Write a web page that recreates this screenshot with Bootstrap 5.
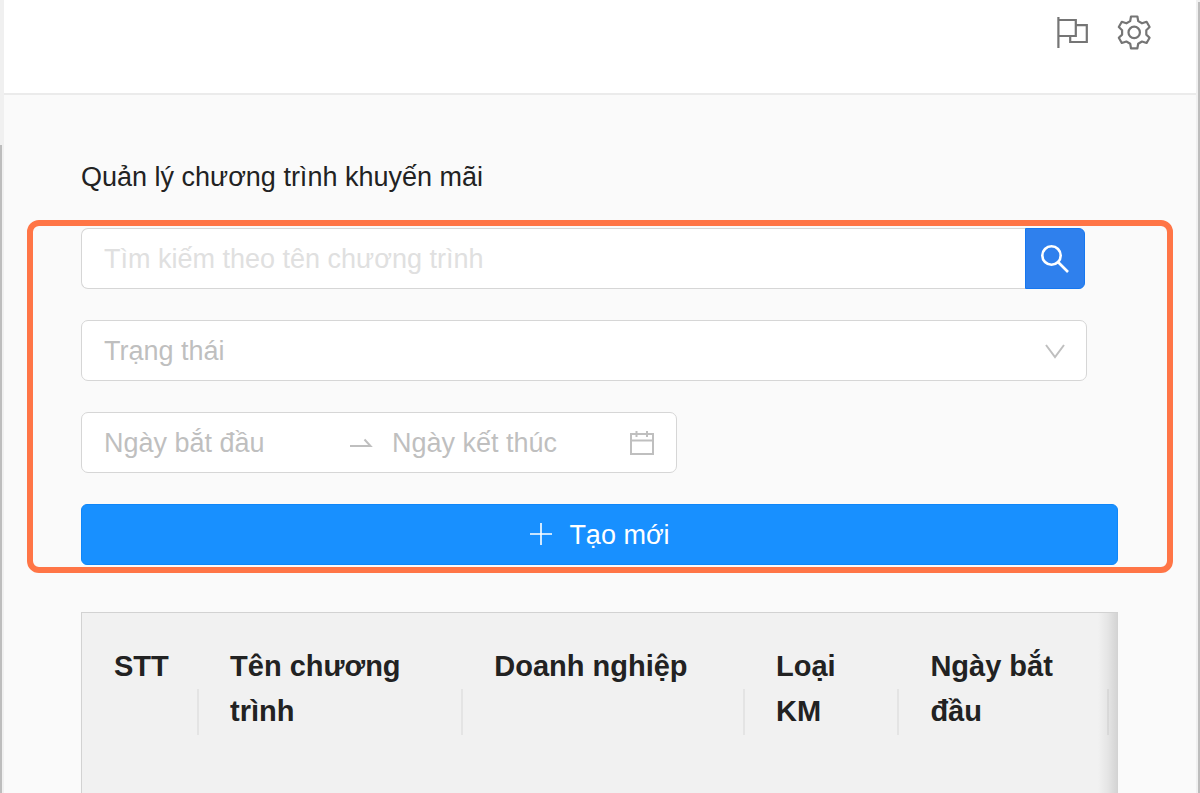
<!DOCTYPE html>
<html lang="vi">
<head>
<meta charset="utf-8">
<meta name="viewport" content="width=device-width, initial-scale=1">
<title>Quản lý chương trình khuyến mãi</title>
<link href="https://cdn.jsdelivr.net/npm/bootstrap@5.3.0/dist/css/bootstrap.min.css" rel="stylesheet">
<style>
  body { font-family: "Liberation Sans", Arial, sans-serif; font-size: 27px; line-height: 40px; color: #222; background: #fafafa; }
  .edge { flex: 0 0 4px; background: #f0f0f0; }
  .edge-left { padding-top: 145px; }
  .edge-left .thumb { width: 2px; background: #bdbdbd; }
  .edge-right { padding: 2px 0 0 2px; }
  .edge-right .thumb { width: 2px; background: #bdbdbd; }
  .topbar { height: 95px; padding: 14px 44px 0 0; gap: 26px; background: #fff; border-bottom: 2px solid #ebebeb; }
  .tool { width: 36px; height: 36px; color: #757575; }
  .page-title { font-size: 27px; line-height: 40px; font-weight: 400; margin: 62px 0 23px; padding: 0 77px; }
  .filters { margin: 0 23px; padding: 2px 49px 2px 48px; border: 6px solid #ff7546; border-radius: 12px; gap: 31px; }
  .field { height: 61px; background: #fff; border: 1px solid #d6d6d6; border-radius: 7px; }
  .field:focus-within { border-color: #40a9ff; }
  .plain { font-size: 27px; line-height: 40px; color: #333; background: transparent; padding: 0; border: 0; outline: 0; min-width: 0; }
  .plain::placeholder { color: #bfbfbf; opacity: 1; }
  .search { margin-right: 33px; }
  .search .field { border-right: 0; border-radius: 7px 0 0 7px; padding-left: 22px; }
  .search .plain::placeholder { color: #e0e0e0; }
  .btn-search { width: 60px; padding: 0; border-radius: 0 6px 6px 0; background: #2f80ed; border: 1px solid #1677f0; color: #fff; }
  .status { margin-right: 31px; }
  .status select { appearance: none; padding: 0 60px 0 22px; color: #bfbfbf; font-size: 27px; outline: 0; }
  .status svg { right: 20px; top: 19px; pointer-events: none; }
  .range { width: 57.5%; padding: 0 20px 0 22px; margin-right: auto; }
  .range .start { flex: 0 0 244px; }
  .btn-create { height: 61px; padding: 2px 0 0; gap: 16px; border-radius: 6px; background: #1890ff; border: 1px solid #0f86f8; color: #fff; font-size: 27px; }
  .grid-box { margin: 39px 78px 0 77px; border: solid #d2d2d2; border-width: 1px 0 0 1px; background: #f1f1f1; }
  .grid-box::after { content: ""; position: absolute; top: 0; right: 0; bottom: 0; width: 20px; background: linear-gradient(to right, rgba(0,0,0,0), rgba(0,0,0,.05) 50%, rgba(0,0,0,.13)); }
  .grid { width: 100%; table-layout: fixed; }
  .grid th { height: 199px; padding: 31px 20px 0 31px; vertical-align: top; font-size: 29px; line-height: 45px; font-weight: 700; background: linear-gradient(#e4e4e4, #e4e4e4) right 0 top 76px / 2px 46px no-repeat; }
  .grid th:first-child { padding-left: 32px; }
  .grid th:last-child { background: none; padding: 0; }
  .w-no { width: 11.3%; } .w-name { width: 25.5%; } .w-org { width: 27.2%; } .w-type { width: 14.9%; } .w-date { width: 20.2%; }
</style>
</head>
<body>
<div class="d-flex vh-100 overflow-hidden">
  <div class="edge edge-left d-flex"><div class="thumb"></div></div>
  <div class="flex-grow-1 overflow-hidden">
    <header class="topbar d-flex justify-content-end">
      <button type="button" class="tool btn p-0 border-0 d-flex" aria-label="Ngôn ngữ">
        <svg width="36" height="36" viewBox="0 0 36 36" fill="none" stroke="currentColor" stroke-width="2.2"><path d="M4.400 3v31M4.400 6h17.400v16H4.400M21.800 11.200h11V28H16.200v-6"/></svg>
      </button>
      <button type="button" class="tool btn p-0 border-0 d-flex" aria-label="Cài đặt">
        <svg width="36" height="36" viewBox="0 0 36 36" fill="none" stroke="currentColor" stroke-width="2.2" stroke-linejoin="round"><path d="M15 2.500h6.400l.8 4.600 3.800 2.200 4.600-1.500 3 5.200-3.300 3.200v4.400l3.300 3.200-3 5.200-4.600-1.500-3.800 2.200-.8 4.600H15l-.8-4.600-3.800-2.200-4.600 1.500-3-5.200 3.300-3.200v-4.400L2.800 13l3-5.200 4.600 1.500 3.800-2.200z"/><circle cx="18.200" cy="18.400" r="5.700"/></svg>
      </button>
    </header>
    <main>
      <h1 class="page-title">Quản lý chương trình khuyến mãi</h1>
      <form class="filters d-flex flex-column">
        <div class="search d-flex">
          <div class="field flex-grow-1 d-flex align-items-center">
            <input class="plain w-100" type="text" placeholder="Tìm kiếm theo tên chương trình" aria-label="Tìm kiếm theo tên chương trình">
          </div>
          <button type="button" class="btn btn-search d-flex align-items-center justify-content-center" aria-label="Tìm kiếm">
            <svg width="32" height="32" viewBox="0 0 32 32" fill="none" stroke="currentColor" stroke-width="2.600"><circle cx="12.500" cy="12.500" r="9.200"/><path d="M19 19l10 10"/></svg>
          </button>
        </div>
        <div class="status position-relative">
          <select class="field w-100" aria-label="Trạng thái"><option>Trạng thái</option><option>Hoạt động</option></select>
          <svg class="position-absolute" width="24" height="24" viewBox="0 0 24 24" fill="none" stroke="#bfbfbf" stroke-width="2"><path d="M3 6l9 12 9-12"/></svg>
        </div>
        <div class="range field d-flex align-items-center">
          <input class="plain start" type="text" placeholder="Ngày bắt đầu" aria-label="Ngày bắt đầu">
          <svg class="flex-shrink-0" width="28" height="28" viewBox="0 0 28 28" fill="none" stroke="#bfbfbf" stroke-width="2"><path d="M2 17h20.500l-6-6.500"/></svg>
          <input class="plain flex-grow-1 ms-3" type="text" placeholder="Ngày kết thúc" aria-label="Ngày kết thúc">
          <svg class="flex-shrink-0" width="28" height="28" viewBox="0 0 28 28" fill="none" stroke="#bfbfbf" stroke-width="2"><path d="M3 5h22v20H3zM3 11.500h22M8.500 2v6M19 2v6"/></svg>
        </div>
        <button type="button" class="btn btn-create d-flex align-items-center justify-content-center">
          <svg class="mb-1" width="24" height="24" viewBox="0 0 24 24" stroke="currentColor" stroke-width="1.600"><path d="M12 1v22M1 12h22"/></svg>
          <span>Tạo mới</span>
        </button>
      </form>
      <div class="grid-box position-relative">
        <table class="grid">
          <thead><tr>
            <th class="w-no" scope="col">STT</th>
            <th class="w-name" scope="col">Tên chương trình</th>
            <th class="w-org" scope="col">Doanh nghiệp</th>
            <th class="w-type" scope="col">Loại KM</th>
            <th class="w-date" scope="col">Ngày bắt đầu</th>
            <th></th>
          </tr></thead>
        </table>
      </div>
    </main>
  </div>
  <div class="edge edge-right d-flex"><div class="thumb"></div></div>
</div>
<script src="https://cdn.jsdelivr.net/npm/bootstrap@5.3.0/dist/js/bootstrap.bundle.min.js"></script>
</body>
</html>
